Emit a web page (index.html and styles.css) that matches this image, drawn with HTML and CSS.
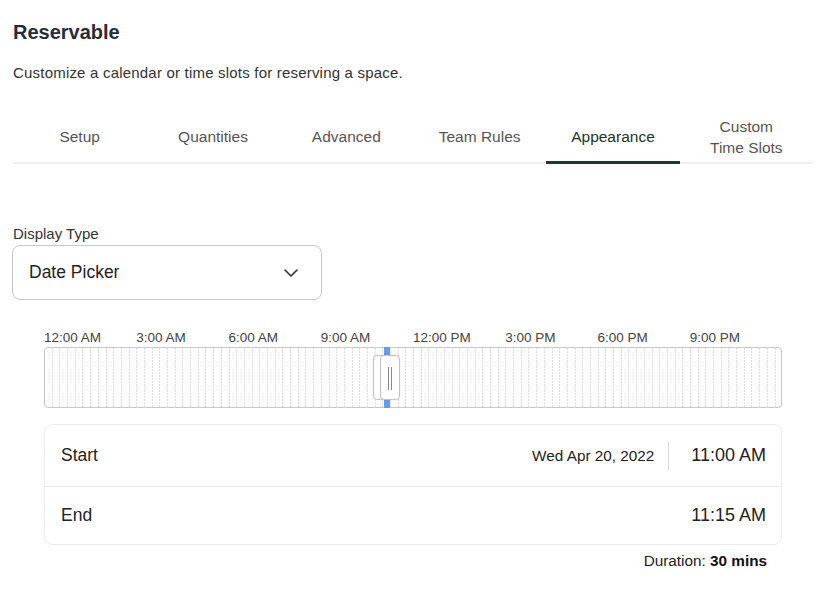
FILE: index.html
```html
<!DOCTYPE html>
<html lang="en">
<head>
    <meta charset="UTF-8">
    <meta name="viewport" content="width=device-width, initial-scale=1.0">
    <title>Reservable</title>
    <link rel="stylesheet" href="styles.css">
</head>
<body>

<div class="page">
    <h2 class="title">Reservable</h2>
    <p class="subtitle">Customize a calendar or time slots for reserving a space.</p>

    <div class="tabs">
        <div class="tab">Setup</div>
        <div class="tab">Quantities</div>
        <div class="tab">Advanced</div>
        <div class="tab">Team Rules</div>
        <div class="tab active">Appearance</div>
        <div class="tab">Custom<br>Time Slots</div>
    </div>

    <label class="field-label">Display Type</label>
    <div class="select">
        <span>Date Picker</span>
        <svg width="14" height="8" viewBox="0 0 14 8">
            <path d="M1 1 L7 7 L13 1" fill="none" stroke="#333" stroke-width="1.6" stroke-linecap="round" stroke-linejoin="round"/>
        </svg>
    </div>

    <div class="timeline">
        <div class="hours">
            <span>12:00 AM</span>
            <span>3:00 AM</span>
            <span>6:00 AM</span>
            <span>9:00 AM</span>
            <span>12:00 PM</span>
            <span>3:00 PM</span>
            <span>6:00 PM</span>
            <span>9:00 PM</span>
        </div>
        <div class="track">
            <div class="range" style="left: 339px; width: 6px;"></div>
            <div class="handle" style="left: 328px;"></div>
            <div class="handle" style="left: 335px;">
                <i></i><i></i>
            </div>
        </div>

        <div class="card">
            <div class="row">
                <span class="row-label">Start</span>
                <span class="date">Wed Apr 20, 2022</span>
                <span class="sep"></span>
                <span class="time">11:00 AM</span>
            </div>
            <div class="row">
                <span class="row-label">End</span>
                <span class="time">11:15 AM</span>
            </div>
        </div>

        <div class="duration">Duration: <b>30 mins</b></div>
    </div>
</div>

</body>
</html>
```

FILE: styles.css
```css
body {
    margin: 0;
    font-family: "Liberation Sans", Arial, sans-serif;
    background-color: #fff;
    color: #333;
}

.page {
    padding: 20px 12px 0 13px;
}

.title {
    margin: 0;
    font-size: 20px;
    line-height: 24px;
    font-weight: bold;
    color: #2a2c35;
}

.subtitle {
    margin: 19px 0 0;
    font-size: 15px;
    line-height: 20px;
    letter-spacing: 0.2px;
    color: #333;
}

.tabs {
    display: flex;
    margin-top: 28px;
    height: 51px;
    border-bottom: 2px solid #eeeeee;
}

.tab {
    flex: 1;
    display: flex;
    align-items: center;
    justify-content: center;
    text-align: center;
    font-size: 15.5px;
    line-height: 21px;
    color: #555;
    margin-bottom: -2px;
    border-bottom: 3px solid transparent;
    padding-top: 1px;
}

.tab.active {
    color: #1c3328;
    border-bottom-color: #1b3a2c;
}

.field-label {
    display: block;
    margin-top: 60px;
    font-size: 15px;
    line-height: 20px;
    color: #333;
}

.select {
    display: flex;
    align-items: center;
    justify-content: space-between;
    box-sizing: border-box;
    width: 310px;
    height: 55px;
    margin: 1px 0 0 -1px;
    padding: 0 23px 0 16px;
    border: 1px solid #c8c8c8;
    border-radius: 8px;
    font-size: 17.5px;
    color: #222;
}

.timeline {
    width: 738px;
    margin: 29px 0 0 31px;
}

.hours {
    display: flex;
    font-size: 13.5px;
    line-height: 17px;
    color: #444;
}

.hours span {
    width: 92.25px;
}

.track {
    position: relative;
    height: 61px;
    margin-top: 1px;
    border: 1px solid #c8c8c8;
    border-radius: 4px;
    box-sizing: border-box;
    background-image:
        repeating-linear-gradient(to bottom, transparent 0 2px, #fff 2px 3px),
        repeating-linear-gradient(to right, transparent 0 6.69px, #dedede 6.69px 7.69px);
}

.range {
    position: absolute;
    top: -1px;
    bottom: -1px;
    background-color: #6a9be8;
}

.handle {
    position: absolute;
    top: 7px;
    width: 20px;
    height: 45px;
    box-sizing: border-box;
    background-color: #fff;
    border: 1px solid #c4c4c4;
    border-radius: 4px;
    box-shadow: 0 0 2px rgba(0, 0, 0, 0.08);
    display: flex;
    justify-content: center;
    gap: 2px;
    padding-top: 11px;
}

.handle i {
    display: block;
    width: 1px;
    height: 23px;
    background-color: #888;
}

.card {
    margin-top: 16px;
    border: 1px solid #ececec;
    border-radius: 8px;
}

.row {
    display: flex;
    align-items: center;
    height: 61px;
    padding: 0 15px 0 16px;
    font-size: 17.5px;
    color: #222;
}

.row + .row {
    height: 57px;
    border-top: 1px solid #ececec;
}

.row-label {
    flex: 1;
}

.date {
    font-size: 15.3px;
}

.time {
    font-size: 18px;
}

.sep {
    width: 1px;
    height: 28px;
    margin: 0 22px 0 14px;
    background-color: #dcdcdc;
}

.duration {
    margin-top: 7px;
    padding-right: 15px;
    text-align: right;
    font-size: 15.3px;
    line-height: 18px;
    color: #222;
}

.duration b {
    color: #111;
}
```
